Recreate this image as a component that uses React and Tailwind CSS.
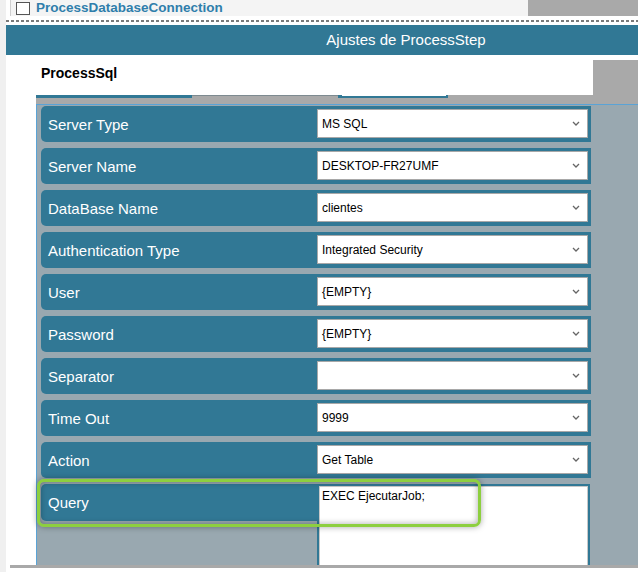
const rows = [
  ["Server Type", "MS SQL"],
  ["Server Name", "DESKTOP-FR27UMF"],
  ["DataBase Name", "clientes"],
  ["Authentication Type", "Integrated Security"],
  ["User", "{EMPTY}"],
  ["Password", "{EMPTY}"],
  ["Separator", ""],
  ["Time Out", "9999"],
  ["Action", "Get Table"],
];

function Chevron() {
  return (
    <svg width="8" height="5" viewBox="0 0 8 5" className="shrink-0">
      <path d="M1 1 L4 4 L7 1" fill="none" stroke="#666" strokeWidth="1.3" />
    </svg>
  );
}

function SelectRow({ label, value }) {
  return (
    <div className="flex w-[550px] h-[36px] shrink-0 bg-[#317895] rounded-l-[5px]">
      <div className="w-[276px] flex items-center pl-[7px] text-[15px] text-white leading-none">
        {label}
      </div>
      <div className="w-[271px] h-[29px] mt-[3px] bg-white border border-[#a8a8a8] flex items-center pl-[4px] pr-[7px]">
        <span className="flex-1 text-[12px] text-black leading-none">{value}</span>
        <Chevron />
      </div>
    </div>
  );
}

export default function App() {
  return (
    <div className="relative w-[638px] h-[572px] overflow-hidden bg-white flex font-['Liberation_Sans',Arial,sans-serif]">
      <div className="w-[6px] h-full bg-[#f0f0f0] shrink-0" />
      <div className="flex-1 min-w-0 flex flex-col overflow-hidden">
        {/* top row */}
        <div className="h-[16px] flex shrink-0">
          <div className="w-[4px] shrink-0" />
          <div className="w-[518px] shrink-0 border-l border-[#cfcfcf] bg-[#f4f4f4] flex items-center pl-[5px]">
            <div className="w-[14px] h-[13px] border border-[#555] bg-white shrink-0" />
            <span className="ml-[6px] text-[13.5px] font-bold text-[#2f7eab] leading-none">
              ProcessDatabaseConnection
            </span>
          </div>
          <div className="flex-1 bg-[#a9a9a9]" />
        </div>
        {/* dashed separator */}
        <div className="mt-[4px] h-[2px] shrink-0 bg-[repeating-linear-gradient(90deg,#7a7a7a_0_3px,transparent_3px_5px)]" />
        {/* header */}
        <div className="mt-[3px] h-[30px] w-[800px] shrink-0 bg-[#317895] flex items-center justify-center text-white text-[15px]">
          Ajustes de ProcessStep
        </div>
        {/* title area */}
        <div className="h-[40px] shrink-0 flex">
          <div className="pl-[35px] pt-[10px] text-[14px] leading-[16px] font-bold text-black">ProcessSql</div>
          <div className="ml-auto mt-[5px] w-[45px] h-[35px] bg-[#a9a9a9]" />
        </div>
        {/* tab strip */}
        <div className="ml-[30px] h-[9px] shrink-0 bg-[#a9a9a9] flex items-start">
          <div className="w-[156px] h-[3px] bg-[#317895]" />
          <div className="w-[146px] h-[1px] bg-[#7d8a90]" />
          <div className="w-[4px] h-[3px] bg-[#317895]" />
          <div className="w-[106px] h-[3px] bg-white border-b-2 border-r-2 border-[#317895]" />
        </div>
        <div className="ml-[30px] h-[1px] shrink-0 bg-[#5aa3d6]" />
        {/* panel */}
        <div className="ml-[30px] flex-1 min-h-0 overflow-hidden border-l border-[#5aa3d6] bg-[#99a8b0] pl-[4px] pt-[1px] flex flex-col gap-[6px]">
          {rows.map(([l, v]) => (
            <SelectRow key={l} label={l} value={v} />
          ))}
          <div className="flex w-[550px] shrink-0 items-start">
            <div className="w-[276px] h-[37px] bg-[#317895] rounded-l-[5px] flex items-center pl-[7px] text-[15px] text-white leading-none">
              Query
            </div>
            <div className="w-[273px] h-[90px] border-2 border-[#317895] bg-white">
              <div className="h-full border border-[#c8c8c8] pl-[2px] pt-[2px] text-[12px] leading-[14px] text-black">
                EXEC EjecutarJob;
              </div>
            </div>
          </div>
        </div>
        <div className="ml-[4px] h-[3px] shrink-0 bg-[#a9a9a9]" />
        <div className="h-[4px] shrink-0" />
      </div>
      {/* highlight overlay */}
      <div className="absolute left-[37px] top-[479px] w-[444px] h-[48px] border-[3px] border-[#8dcf3f] rounded-[7px] shadow-[0_0_6px_rgba(0,0,0,0.35),inset_0_0_6px_rgba(0,0,0,0.35)]" />
    </div>
  );
}
